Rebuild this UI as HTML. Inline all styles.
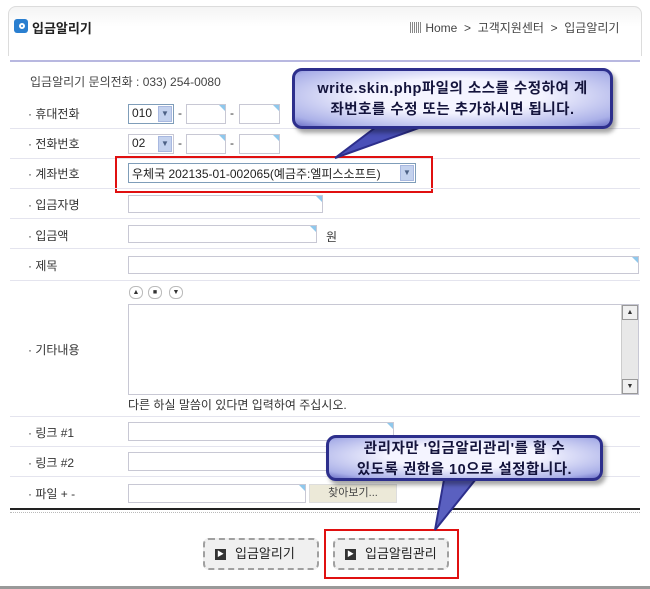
<!DOCTYPE html>
<html><head><meta charset="utf-8"><style>
*{margin:0;padding:0;box-sizing:border-box}
body{width:650px;height:589px;background:#fff;position:relative;overflow:hidden;font-family:"Liberation Sans","Noto Sans CJK KR",sans-serif;font-size:12px;color:#333}
.a{position:absolute}
.hl{position:absolute;left:10px;width:630px;height:1px;background:#e4e4ee}
.lbl{position:absolute;left:28px;font-size:12px;color:#333}
.in{position:absolute;border:1px solid #c8c8d4;background:#fff}
.in:after{content:"";position:absolute;right:0;top:0;border-top:6px solid #8fc8ec;border-left:6px solid transparent}
.sel{position:absolute;border:1px solid #7f9db9;background:#fff;font-size:12px;padding:1px 3px;color:#222}
.sel i{position:absolute;right:1px;top:1px;bottom:1px;width:14px;background:#c4d2ee;border:1px solid #a8b8e0;font-style:normal;font-size:8px;color:#4d6185;text-align:center;line-height:14px}
.call{position:absolute;border:3px solid #2d2f8c;border-radius:10px;background:radial-gradient(ellipse at 50% 45%,#f4f4ff 40%,#aab0e8 85%,#6d72c8 100%);box-shadow:3px 4px 4px rgba(0,0,0,.35);color:#14143c;font-weight:bold;font-size:14.5px;text-align:center;line-height:21px;letter-spacing:.5px}
.btn{position:absolute;height:32px;border:2px dashed #a0a0a0;border-radius:6px;background:#f0f0f0;font-size:13px;color:#222;line-height:28px;padding-left:30px}
.btn:before{content:"▶";position:absolute;left:10px;top:9px;width:11px;height:11px;background:#333;color:#fff;font-size:7px;line-height:11px;text-align:center}
</style></head><body>
<div class="a" style="left:8px;top:6px;width:634px;height:50px;border:1px solid #dcdcdc;border-bottom:none;border-radius:8px 8px 0 0;background:linear-gradient(#f4f4f4,#fff 40%)"></div>
<div class="a" style="left:14px;top:19px;width:14px;height:14px;background:#2a7fd0;border-radius:3px"></div>
<div class="a" style="left:19px;top:23px;width:6px;height:6px;border:2px solid #fff;border-radius:50%"></div>
<div class="a" style="left:32px;top:18px;font-weight:bold;font-size:13px;color:#222">입금알리기</div>
<div class="a" style="left:410px;top:19px;font-size:12px;color:#444"><span style="display:inline-block;width:12px;height:11px;background:repeating-linear-gradient(90deg,#888 0 1px,#fff 1px 2px);vertical-align:-1px"></span> Home &nbsp;&gt;&nbsp; 고객지원센터 &nbsp;&gt;&nbsp; 입금알리기</div>
<div class="a" style="left:10px;top:60px;width:630px;height:2px;background:#b8b8e0"></div>
<div class="a" style="left:30px;top:73px;color:#444">입금알리기 문의전화 : 033) 254-0080</div>

<div class="lbl" style="top:105px">· 휴대전화</div>
<div class="sel" style="left:128px;top:104px;width:46px;height:20px">010<i>▼</i></div>
<div class="a" style="left:178px;top:106px">-</div>
<div class="in" style="left:186px;top:104px;width:40px;height:20px"></div>
<div class="a" style="left:230px;top:106px">-</div>
<div class="in" style="left:239px;top:104px;width:41px;height:20px"></div>
<div class="hl" style="top:128px"></div>
<div class="lbl" style="top:135px">· 전화번호</div>
<div class="sel" style="left:128px;top:134px;width:46px;height:20px;border-color:#c8c8d4">02<i>▼</i></div>
<div class="a" style="left:178px;top:136px">-</div>
<div class="in" style="left:186px;top:134px;width:40px;height:20px"></div>
<div class="a" style="left:230px;top:136px">-</div>
<div class="in" style="left:239px;top:134px;width:41px;height:20px"></div>
<div class="hl" style="top:158px"></div>
<div class="lbl" style="top:165px">· 계좌번호</div>
<div class="sel" style="left:128px;top:163px;width:288px;height:20px">우체국 202135-01-002065(예금주:엘피스소프트)<i>▼</i></div>
<div class="a" style="left:115px;top:156px;width:318px;height:37px;border:2px solid #e01010"></div>
<div class="hl" style="top:188px"></div>
<div class="lbl" style="top:196px">· 입금자명</div>
<div class="in" style="left:128px;top:195px;width:195px;height:18px"></div>
<div class="hl" style="top:218px"></div>
<div class="lbl" style="top:227px">· 입금액</div>
<div class="in" style="left:128px;top:225px;width:189px;height:18px"></div>
<div class="a" style="left:326px;top:228px">원</div>
<div class="hl" style="top:248px"></div>
<div class="lbl" style="top:257px">· 제목</div>
<div class="in" style="left:128px;top:256px;width:511px;height:18px"></div>
<div class="hl" style="top:280px"></div>
<div class="a" style="left:129px;top:286px;width:14px;height:13px;border:1px solid #bbb;border-radius:6px;font-size:7px;text-align:center;line-height:11px">▲</div>
<div class="a" style="left:148px;top:286px;width:14px;height:13px;border:1px solid #bbb;border-radius:6px;font-size:7px;text-align:center;line-height:11px">■</div>
<div class="a" style="left:169px;top:286px;width:14px;height:13px;border:1px solid #bbb;border-radius:6px;font-size:7px;text-align:center;line-height:11px">▼</div>
<div class="in" style="left:128px;top:304px;width:511px;height:91px"></div>
<div class="a" style="left:621px;top:305px;width:17px;height:89px;background:#e8e8e8;border-left:1px solid #ccc"></div>
<div class="a" style="left:622px;top:305px;width:16px;height:15px;background:#f0f0f0;border:1px solid #999;font-size:7px;text-align:center;line-height:13px">▲</div>
<div class="a" style="left:622px;top:379px;width:16px;height:15px;background:#f0f0f0;border:1px solid #999;font-size:7px;text-align:center;line-height:13px">▼</div>
<div class="lbl" style="top:341px">· 기타내용</div>
<div class="a" style="left:128px;top:396px;color:#333">다른 하실 말씀이 있다면 입력하여 주십시오.</div>
<div class="hl" style="top:416px"></div>
<div class="lbl" style="top:424px">· 링크 #1</div>
<div class="in" style="left:128px;top:422px;width:266px;height:19px"></div>
<div class="hl" style="top:446px"></div>
<div class="lbl" style="top:454px">· 링크 #2</div>
<div class="in" style="left:128px;top:452px;width:266px;height:19px"></div>
<div class="hl" style="top:476px"></div>
<div class="lbl" style="top:485px">· 파일 + -</div>
<div class="in" style="left:128px;top:484px;width:178px;height:19px"></div>
<div class="a" style="left:309px;top:484px;width:88px;height:19px;background:#ece9d8;border:1px solid #ddd;font-size:11px;text-align:center;line-height:17px;color:#444">찾아보기...</div>
<div class="a" style="left:10px;top:508px;width:630px;height:2px;background:#222"></div>
<div class="a" style="left:10px;top:512px;width:630px;height:1px;border-top:1px dotted #bbb"></div>

<div class="btn" style="left:203px;top:538px;width:116px">입금알리기</div>
<div class="btn" style="left:333px;top:538px;width:116px">입금알림관리</div>
<div class="a" style="left:324px;top:529px;width:135px;height:50px;border:2px solid #e01010"></div>
<div class="a" style="left:0;top:586px;width:650px;height:3px;background:#999"></div>

<svg class="a" style="left:0;top:0" width="650" height="589">
<polygon points="430,124 380,124 335,158" fill="#4a50b8" stroke="#2d2f8c" stroke-width="2"/>
<polygon points="395,474 360,474 350,530 " fill="#5a60c0" stroke="#2d2f8c" stroke-width="2" transform="translate(85,0) scale(1,1)"/>
</svg>
<div class="call" style="left:292px;top:68px;width:321px;height:61px;padding-top:8px">write.skin.php파일의 소스를 수정하여 계<br>좌번호를 수정 또는 추가하시면 됩니다.</div>
<div class="call" style="left:326px;top:435px;width:277px;height:46px;padding-top:1px">관리자만 '입금알리관리'를 할 수<br>있도록 권한을 10으로 설정합니다.</div>
</body></html>
